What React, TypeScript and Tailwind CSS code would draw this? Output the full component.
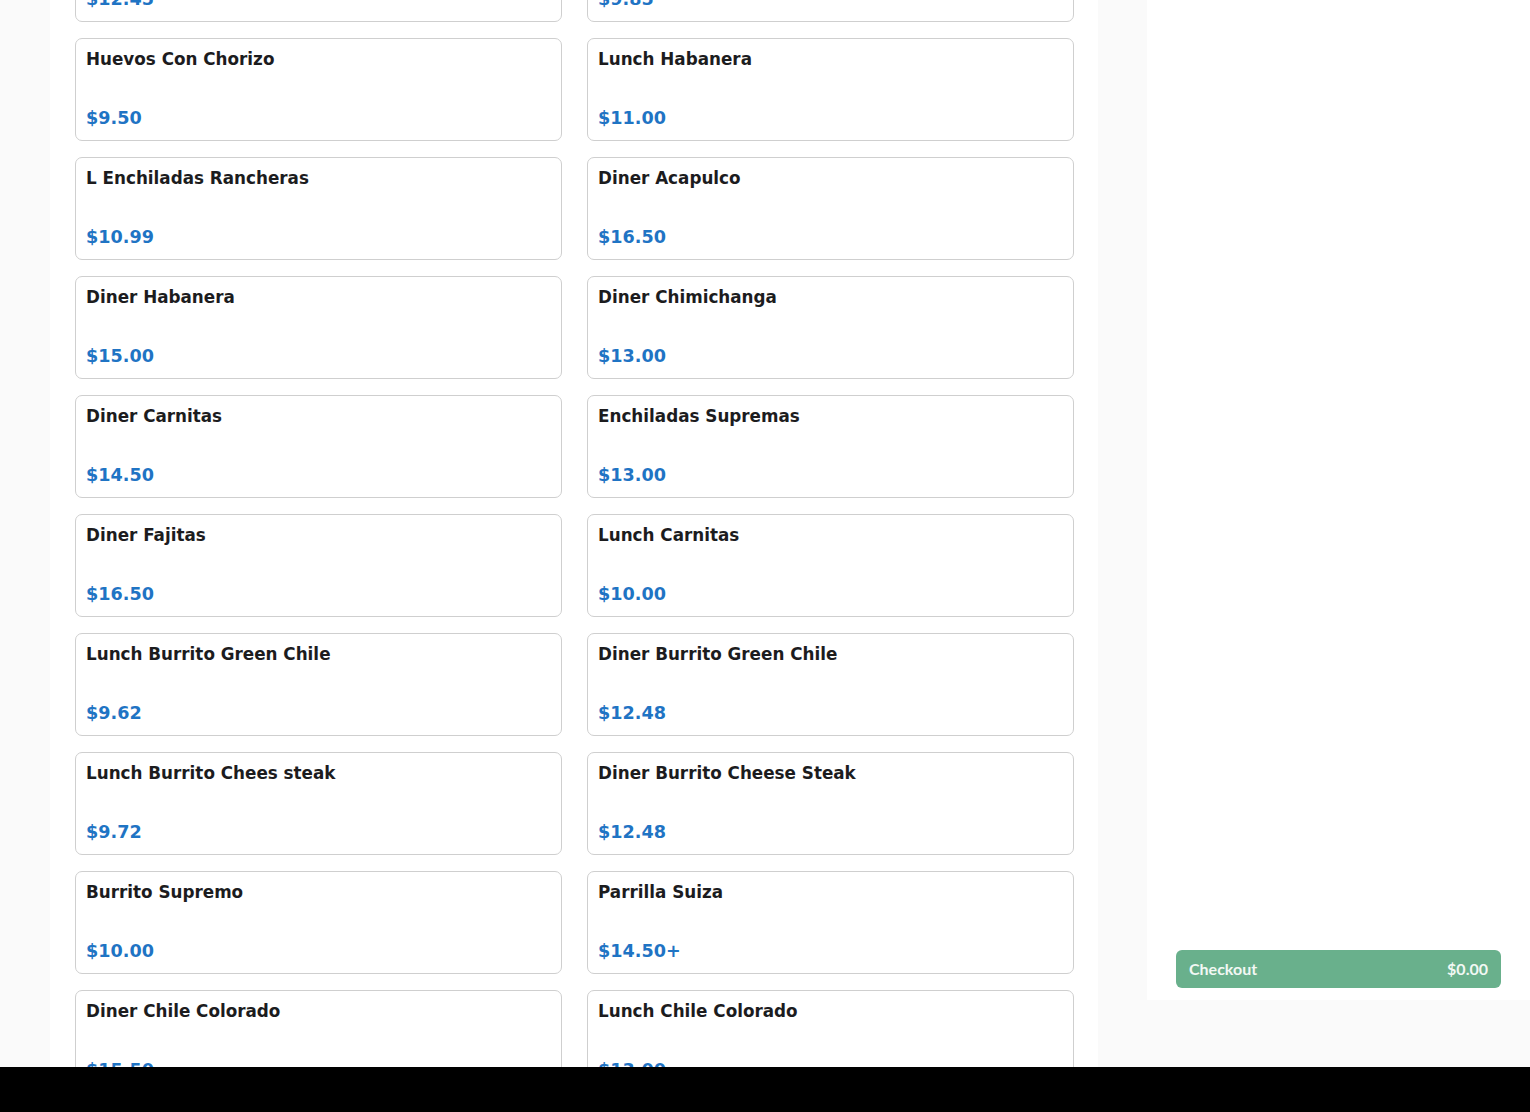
import React from "react";

const items: [string, string][] = [
  ["Lunch Item", "$12.45"],
  ["Lunch Item", "$9.85"],
  ["Huevos Con Chorizo", "$9.50"],
  ["Lunch Habanera", "$11.00"],
  ["L Enchiladas Rancheras", "$10.99"],
  ["Diner Acapulco", "$16.50"],
  ["Diner Habanera", "$15.00"],
  ["Diner Chimichanga", "$13.00"],
  ["Diner Carnitas", "$14.50"],
  ["Enchiladas Supremas", "$13.00"],
  ["Diner Fajitas", "$16.50"],
  ["Lunch Carnitas", "$10.00"],
  ["Lunch Burrito Green Chile", "$9.62"],
  ["Diner Burrito Green Chile", "$12.48"],
  ["Lunch Burrito Chees steak", "$9.72"],
  ["Diner Burrito Cheese Steak", "$12.48"],
  ["Burrito Supremo", "$10.00"],
  ["Parrilla Suiza", "$14.50+"],
  ["Diner Chile Colorado", "$15.50"],
  ["Lunch Chile Colorado", "$13.00"],
];

export default function App() {
  return (
    <div className="w-[1530px] h-[1112px] overflow-hidden bg-[#fafafa] flex flex-col">
      <div className="flex h-[1067px] overflow-hidden">
        <div className="w-[50px] shrink-0" />
        <main className="w-[1048px] shrink-0 bg-white pl-[25px] pr-[24px] overflow-hidden">
          <div
            className="grid grid-cols-2 gap-x-[25px] gap-y-[16px] mt-[-81px]"
            style={{ fontFamily: '"DejaVu Sans", sans-serif' }}
          >
            {items.map(([name, price], i) => (
              <div
                key={i}
                className="h-[103px] border border-[#cfcfcf] rounded-[7px] bg-white px-[10px] pt-[10px] pb-[11px] flex flex-col justify-between"
              >
                <div className="text-[16.8px] leading-[20px] font-bold text-[#1c1c1e]">{name}</div>
                <div className="text-[17.6px] leading-[21px] font-bold text-[#1f74c4]">{price}</div>
              </div>
            ))}
          </div>
        </main>
        <div className="w-[49px] shrink-0" />
        <aside className="flex-1 h-[1000px] bg-white flex flex-col justify-end px-[29px] pb-[12px]">
          <button
            className="h-[38px] w-full rounded-[6px] bg-[#69b08c] text-[#f2f8f4] flex items-center justify-between px-[13px] pb-[1px] text-[16px] font-bold"
            style={{ fontFamily: 'Lato, "Noto Sans", sans-serif' }}
          >
            <span>Checkout</span>
            <span>$0.00</span>
          </button>
        </aside>
      </div>
      <div className="flex-1 bg-black" />
    </div>
  );
}
